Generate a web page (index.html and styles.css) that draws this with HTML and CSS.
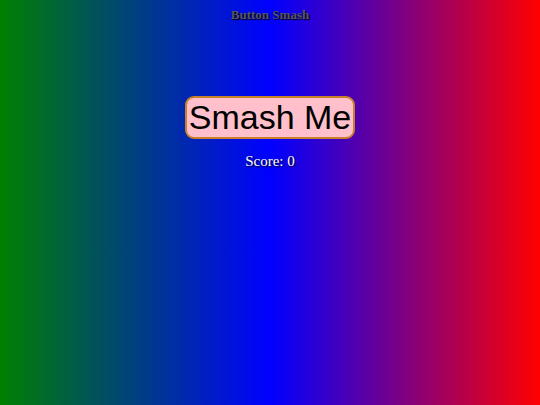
FILE: index.html
```html
<!DOCTYPE html>
<html lang="en">
<head>
  <meta charset="UTF-8" />
  <title>Button Smash</title>
  <link rel="stylesheet" href="styles.css">
</head>
<body>
  <div class="page">
    <h1 class="title">Button Smash</h1>
    <button class="smash" id="smash">Smash Me</button>
    <div class="score">Score: <span id="score">0</span></div>
  </div>
  <script>
    let score = 0;
    document.getElementById('smash').addEventListener('click', () => {
      score++;
      document.getElementById('score').textContent = score;
    });
  </script>
</body>
</html>
```

FILE: styles.css
```css
* {
  box-sizing: border-box;
}

html, body {
  margin: 0;
  padding: 0;
  height: 100%;
}

body {
  font-family: "Liberation Serif", "Times New Roman", serif;
  background: linear-gradient(to right, #008000, #0000ff, #ff0000);
}

.page {
  display: flex;
  flex-direction: column;
  align-items: center;
}

.title {
  margin: 7px 0 0;
  font-size: 13px;
  font-weight: bold;
  color: #555566;
  text-shadow: 1px 1px 1px #000;
}

.smash {
  margin-top: 73px;
  width: 170px;
  height: 43px;
  padding: 0;
  font-family: "Liberation Sans", Arial, sans-serif;
  font-size: 34px;
  color: #000;
  background-color: #ffc0cb;
  border: 2px solid #c9802a;
  border-radius: 9px;
  cursor: pointer;
}

.score {
  margin-top: 14px;
  font-size: 15px;
  color: #fff;
  text-shadow: 1px 1px 2px #000;
}
```
